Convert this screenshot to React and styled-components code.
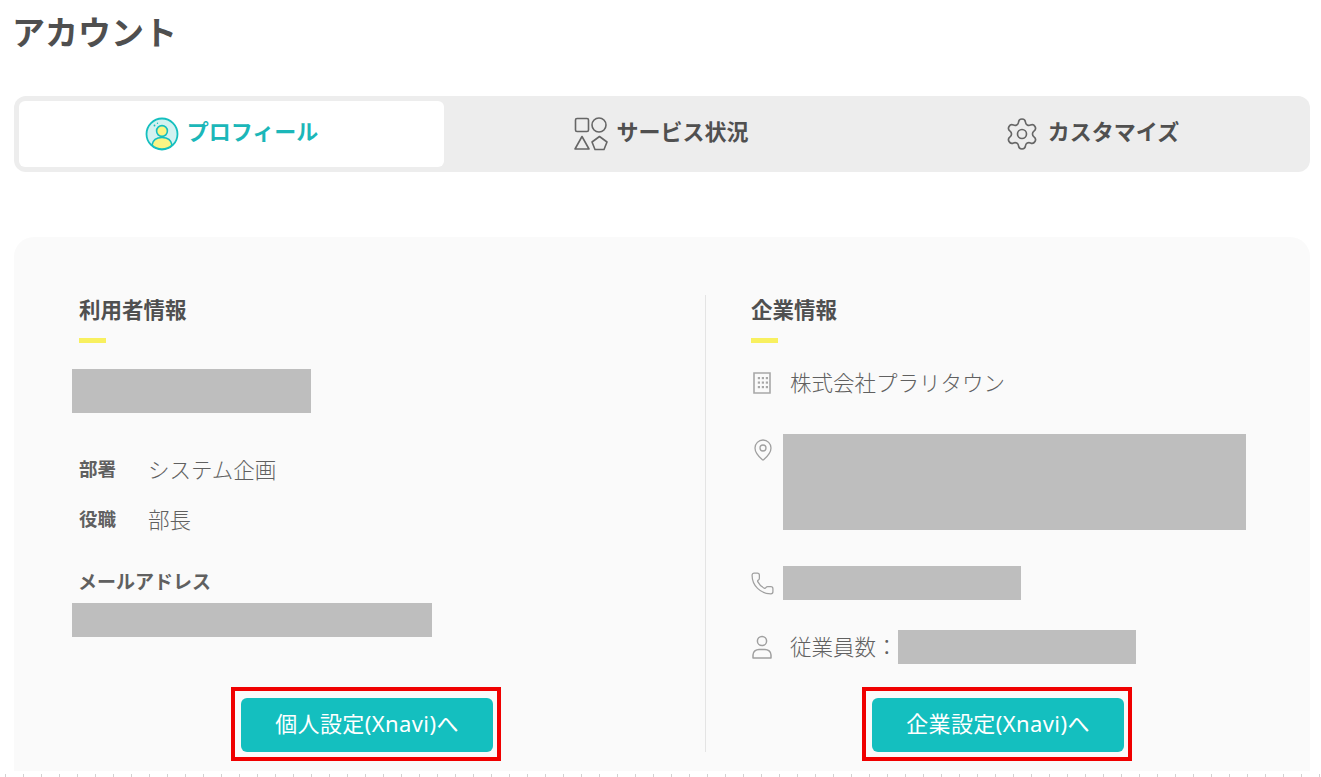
import React from 'react'
import styled, { createGlobalStyle } from 'styled-components'
import { Settings, Phone, MapPin } from 'lucide-react'

const GlobalStyle = createGlobalStyle`
    html, body {
        margin: 0;
        height: 777px;
        overflow: hidden;
        background: #fff;
    }
    body {
        font-family: "Noto Sans CJK JP", "Noto Sans", sans-serif;
        color: #505050;
    }
`

const ProfileIcon = () => (
    <svg width="34" height="34" viewBox="0 0 34 34">
        <circle cx="17" cy="17" r="15.5" fill="#d3f2f1" stroke="#14bfbf" strokeWidth="1.8" />
        <circle cx="9.5" cy="8.5" r="0.9" fill="#14bfbf" />
        <circle cx="12.5" cy="6.2" r="0.7" fill="#14bfbf" />
        <circle cx="17" cy="14" r="5.4" fill="#fbf585" stroke="#14bfbf" strokeWidth="1.6" />
        <path d="M7 28 C8 22 12 20.5 17 20.5 C22 20.5 26 22 27 28 C24 31 20 32 17 32 C14 32 10 31 7 28 Z" fill="#fbf585" stroke="#14bfbf" strokeWidth="1.6" />
    </svg>
)

const ShapesIcon = () => (
    <svg width="34" height="34" viewBox="0 0 34 34" fill="none" stroke="#666" strokeWidth="1.6" strokeLinejoin="round">
        <rect x="1.5" y="1.5" width="13" height="13" rx="1.5" />
        <circle cx="25" cy="8" r="7" />
        <path d="M8 19.5 L15 32 H1 Z" />
        <path d="M25.5 19.5 L33 25 L30 32.5 H21 L18 25 Z" />
    </svg>
)

const BuildingIcon = () => (
    <svg width="18" height="22" viewBox="0 0 18 22" fill="#a8a8a8">
        <path d="M1 1 H17 V21 H1 Z" fill="none" stroke="#a8a8a8" strokeWidth="1.6" />
        {[5, 9, 13].map(x => [6, 10.5, 15].map(y => <rect key={`${x}-${y}`} x={x - 0.2} y={y - 1} width="2.2" height="2.2" />))}
    </svg>
)

const PersonIcon = () => (
    <svg width="22" height="24" viewBox="0 0 22 24" fill="none" stroke="#a0a0a0" strokeWidth="1.5">
        <circle cx="11" cy="6" r="4.6" />
        <path d="M2 23 V20 C2 16.5 5 14.5 8 14.5 H14 C17 14.5 20 16.5 20 20 V23 Z" strokeLinejoin="round" />
    </svg>
)

const Tab = ({ active, icon, children }) => (
    <TabItem $active={active}>
        {icon}
        <TabLabel>{children}</TabLabel>
    </TabItem>
)

const InfoRow = ({ icon, top, offset, iconShift, children }) => (
    <Row $top={top} $offset={offset}>
        <IconCell $top={top} $shift={iconShift}>{icon}</IconCell>
        {children}
    </Row>
)

export default function App() {
    return (
        <Page>
            <GlobalStyle />
            <Title>アカウント</Title>
            <TabBar>
                <Tab active icon={<ProfileIcon />}>プロフィール</Tab>
                <Tab icon={<ShapesIcon />}>サービス状況</Tab>
                <Tab icon={<Settings size={36} strokeWidth={1.1} color="#666" />}>カスタマイズ</Tab>
            </TabBar>
            <Card>
                <LeftColumn>
                    <Heading>利用者情報</Heading>
                    <Accent />
                    <Masked $width={239} $height={44} />
                    <Fields>
                        <Field><FieldLabel>部署</FieldLabel><FieldValue>システム企画</FieldValue></Field>
                        <Field><FieldLabel>役職</FieldLabel><FieldValue>部長</FieldValue></Field>
                    </Fields>
                    <MailLabel>メールアドレス</MailLabel>
                    <Masked $width={360} $height={34} />
                    <ButtonRow $indent={169}>
                        <LinkButton><ButtonLabel>個人設定(Xnavi)へ</ButtonLabel></LinkButton>
                    </ButtonRow>
                </LeftColumn>
                <RightColumn>
                    <Heading $flush>企業情報</Heading>
                    <Accent $flush />
                    <InfoRow offset={-3} iconShift={2} icon={<BuildingIcon />}>
                        <RowText>株式会社プラリタウン</RowText>
                    </InfoRow>
                    <InfoRow top offset={34} icon={<MapPin size={24} strokeWidth={1.3} color="#a0a0a0" />}>
                        <Masked $width={463} $height={96} />
                    </InfoRow>
                    <InfoRow offset={36} iconShift={-1} icon={<Phone size={25} strokeWidth={1.2} color="#a0a0a0" />}>
                        <Masked $width={238} $height={34} />
                    </InfoRow>
                    <InfoRow offset={30} icon={<PersonIcon />}>
                        <RowText>従業員数：</RowText>
                        <Masked $width={238} $height={34} />
                    </InfoRow>
                    <ButtonRow $indent={121}>
                        <LinkButton><ButtonLabel>企業設定(Xnavi)へ</ButtonLabel></LinkButton>
                    </ButtonRow>
                </RightColumn>
            </Card>
            <Ticks />
        </Page>
    )
}

const Page = styled.div`
    position: relative;
    height: 777px;
    padding: 0 11px 0 14px;
    overflow: hidden;
`

const Title = styled.h1`
    margin: 0 0 0 -2px;
    padding-top: 8px;
    height: 96px;
    box-sizing: border-box;
    font-size: 33px;
    line-height: 46px;
    font-weight: 700;
    color: #4f4f4f;
`

const TabBar = styled.div`
    display: grid;
    grid-template-columns: repeat(3, 425px);
    gap: 5px;
    height: 76px;
    box-sizing: border-box;
    padding: 5px;
    border-radius: 12px;
    background: #ededed;
`

const TabItem = styled.div`
    display: flex;
    align-items: center;
    justify-content: center;
    gap: 8px;
    border-radius: 6px;
    font-size: 22px;
    font-weight: 700;
    color: ${p => p.$active ? '#1bb7b9' : '#505050'};
    background: ${p => p.$active ? '#fff' : 'transparent'};
`

const TabLabel = styled.span`
    margin-bottom: 9px;
`

const Card = styled.div`
    display: grid;
    grid-template-columns: 634px 1fr;
    height: 534px;
    box-sizing: border-box;
    margin-top: 65px;
    padding: 58px 0 19px 58px;
    border-radius: 20px 20px 0 0;
    background: #fafafa;
`

const Column = styled.div`
    display: flex;
    flex-direction: column;
    min-height: 0;
`

const LeftColumn = styled(Column)`
    border-right: 1px solid #e4e4e4;
`

const RightColumn = styled(Column)`
    padding-left: 45px;
`

const Heading = styled.h2`
    margin: 0;
    padding-left: ${p => p.$flush ? 0 : 7}px;
    font-size: 21.5px;
    line-height: 28px;
    font-weight: 700;
    color: #505050;
`

const Accent = styled.div`
    width: 27px;
    height: 5px;
    margin: 15px 0 26px ${p => p.$flush ? 0 : 7}px;
    background: #f8f05f;
`

const Masked = styled.div`
    flex: none;
    width: ${p => p.$width}px;
    height: ${p => p.$height}px;
    background: #bebebe;
`

const Fields = styled.div`
    display: flex;
    flex-direction: column;
    gap: 20px;
    margin-top: 40px;
    padding-left: 7px;
`

const Field = styled.div`
    display: flex;
    align-items: center;
    height: 30px;
`

const FieldLabel = styled.span`
    width: 69px;
    font-size: 18.5px;
    font-weight: 700;
    color: #606060;
`

const FieldValue = styled.span`
    font-size: 21.5px;
    font-weight: 300;
    color: #606060;
`

const MailLabel = styled.div`
    height: 36px;
    margin-top: 34px;
    padding-left: 6px;
    font-size: 19px;
    line-height: 28px;
    font-weight: 700;
    color: #606060;
`

const ButtonRow = styled.div`
    display: flex;
    margin-top: auto;
    padding-left: ${p => p.$indent}px;
`

const LinkButton = styled.div`
    position: relative;
    display: flex;
    align-items: center;
    justify-content: center;
    width: 252px;
    height: 54px;
    border-radius: 6px;
    background: #14bfbf;
    color: #fff;
    font-family: "Noto Sans", "Noto Sans CJK JP", sans-serif;
    font-size: 22px;
    letter-spacing: 0.4px;

    &::after {
        content: "";
        position: absolute;
        inset: -11px -8px -9px -10px;
        border: 4px solid #f00000;
        pointer-events: none;
    }
`

const ButtonLabel = styled.span`
    margin-bottom: 6px;
`

const Row = styled.div`
    display: flex;
    align-items: ${p => p.$top ? 'flex-start' : 'center'};
    flex: none;
    min-height: 34px;
    margin-top: ${p => p.$offset}px;
`

const IconCell = styled.div`
    display: flex;
    flex: none;
    box-sizing: border-box;
    width: 32px;
    padding-top: ${p => p.$top ? 4 : 0}px;
    margin-left: ${p => p.$shift || 0}px;
    margin-right: ${p => -(p.$shift || 0)}px;
`

const RowText = styled.span`
    padding: 0 0 2px 7px;
    font-size: 21.5px;
    font-weight: 300;
    line-height: 32px;
    color: #606060;
`

const Ticks = styled.div`
    position: absolute;
    left: 0;
    right: 0;
    bottom: 0;
    height: 3px;
    background: repeating-linear-gradient(90deg, transparent 0 5px, #d2d2d2 5px 6px, transparent 6px 18px);
`
